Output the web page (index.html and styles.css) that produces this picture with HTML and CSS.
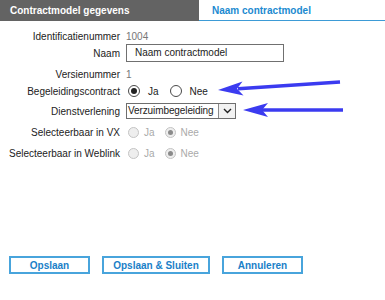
FILE: index.html
```html
<!DOCTYPE html>
<html lang="nl">
<head>
<meta charset="UTF-8">
<title>Contractmodel gegevens</title>
<link rel="stylesheet" href="styles.css">
</head>
<body>

<div class="page">
    <div class="tabs">
        <div class="tab tab-active">Contractmodel gegevens</div>
        <div class="tab tab-link">Naam contractmodel</div>
    </div>

    <div class="form">
        <div class="row row-id">
            <span class="label">Identificatienummer</span>
            <span class="value">1004</span>
        </div>
        <div class="row row-name">
            <span class="label">Naam</span>
            <div class="text-input">Naam contractmodel</div>
        </div>
        <div class="row row-version">
            <span class="label">Versienummer</span>
            <span class="value">1</span>
        </div>
        <div class="row row-contract">
            <span class="label">Begeleidingscontract</span>
            <span class="radio checked"></span><span class="radio-text">Ja</span>
            <span class="radio"></span><span class="radio-text">Nee</span>
        </div>
        <div class="row row-service">
            <span class="label">Dienstverlening</span>
            <div class="select">
                <span class="select-text">Verzuimbegeleiding</span>
                <span class="select-btn">
                    <svg width="9" height="6" viewBox="0 0 9 6"><path d="M1 1 L4.5 4.5 L8 1" fill="none" stroke="#222" stroke-width="1.4"/></svg>
                </span>
            </div>
        </div>
        <div class="row row-vx">
            <span class="label">Selecteerbaar in VX</span>
            <span class="radio disabled"></span><span class="radio-text muted">Ja</span>
            <span class="radio disabled checked"></span><span class="radio-text muted">Nee</span>
        </div>
        <div class="row row-weblink">
            <span class="label">Selecteerbaar in Weblink</span>
            <span class="radio disabled"></span><span class="radio-text muted">Ja</span>
            <span class="radio disabled checked"></span><span class="radio-text muted">Nee</span>
        </div>
    </div>

    <div class="buttons">
        <button class="btn btn-save">Opslaan</button>
        <button class="btn btn-close">Opslaan &amp; Sluiten</button>
        <button class="btn btn-cancel">Annuleren</button>
    </div>

    <!-- annotation arrows -->
    <svg class="arrows" width="385" height="300" viewBox="0 0 385 300">
        <path d="M340 82 L238 88.8" stroke="#3b3bf0" stroke-width="3.5" fill="none"/>
        <polygon points="218,90 242.5,81.4 237,88.8 243.5,95.4" fill="#3b3bf0"/>
        <path d="M343 110 L262 110" stroke="#3b3bf0" stroke-width="3.5" fill="none"/>
        <polygon points="243,110 268,103 262,110 268,117" fill="#3b3bf0"/>
    </svg>
</div>

</body>
</html>
```

FILE: styles.css
```css
body {
    margin: 0;
    background-color: #ffffff;
    font-family: "Liberation Sans", Arial, sans-serif;
    font-size: 10px;
    color: #222222;
}

.page {
    position: relative;
    width: 385px;
    height: 300px;
    overflow: hidden;
}

.tabs {
    display: flex;
    height: 21px;
}

.tab {
    display: flex;
    align-items: center;
    font-weight: bold;
    font-size: 10px;
}

.tab-active {
    width: 189px;
    padding-left: 10px;
    background-color: #636363;
    color: #ffffff;
}

.tab-link {
    flex: 1;
    padding-left: 13px;
    color: #1c8ad0;
    border-bottom: 1px solid #3d9bd6;
}

.form {
    padding-top: 7px;
}

.row {
    display: flex;
    align-items: center;
    height: 16px;
}

.label {
    width: 120px;
    text-align: right;
    margin-right: 6px;
    flex-shrink: 0;
}

.value {
    color: #777777;
}

.row-name {
    height: 18px;
}

.row-version {
    height: 18px;
    margin-top: 3px;
}

.row-service {
    height: 18px;
    margin-top: 3px;
}

.row-vx {
    margin-top: 4px;
}

.row-weblink {
    margin-top: 5px;
}

.text-input {
    box-sizing: border-box;
    width: 158px;
    height: 18px;
    border: 1px solid #707070;
    padding-left: 8px;
    line-height: 16px;
}

.radio {
    box-sizing: border-box;
    width: 12px;
    height: 12px;
    border: 1px solid #4a4a4a;
    border-radius: 50%;
    margin-left: 2px;
    position: relative;
    background: #ffffff;
}

.radio.checked::after {
    content: "";
    position: absolute;
    left: 2px;
    top: 2px;
    width: 6px;
    height: 6px;
    border-radius: 50%;
    background: #222222;
}

.radio-text {
    margin-left: 8px;
    margin-right: 9px;
}

.radio.disabled {
    border-color: #c4c4c4;
    background: #eeeeee;
    width: 11px;
    height: 11px;
}

.row-vx .radio.disabled:first-of-type,
.row-weblink .radio.disabled:first-of-type {
    margin-left: 11px;
}

.radio.disabled.checked::after {
    left: 2px;
    top: 2px;
    width: 5px;
    height: 5px;
    background: #8a8a8a;
}

.radio-text.muted {
    color: #aaaaaa;
    margin-left: 5px;
    margin-right: 8px;
}

.select {
    box-sizing: border-box;
    display: flex;
    align-items: stretch;
    width: 110px;
    height: 16px;
    border: 1px solid #6e6e6e;
}

.select-text {
    flex: 1;
    min-width: 0;
    padding-left: 1px;
    line-height: 14px;
    font-size: 10px;
    letter-spacing: -0.1px;
    white-space: nowrap;
}

.select-btn {
    width: 16px;
    flex-shrink: 0;
    display: flex;
    align-items: center;
    justify-content: center;
    border-left: 1px solid #8a8a8a;
    background: #f2f2f2;
}

.buttons {
    display: flex;
    gap: 12px;
    padding-left: 9px;
    margin-top: 95px;
}

.btn {
    box-sizing: border-box;
    height: 18px;
    border: 2px solid #48a4dc;
    background: #ffffff;
    color: #1a7fc8;
    font-family: "Liberation Sans", Arial, sans-serif;
    font-weight: bold;
    font-size: 10px;
    padding: 0;
}

.btn-save,
.btn-cancel {
    width: 81px;
}

.btn-close {
    width: 108px;
}

.arrows {
    position: absolute;
    left: 0;
    top: 0;
    pointer-events: none;
}
```
